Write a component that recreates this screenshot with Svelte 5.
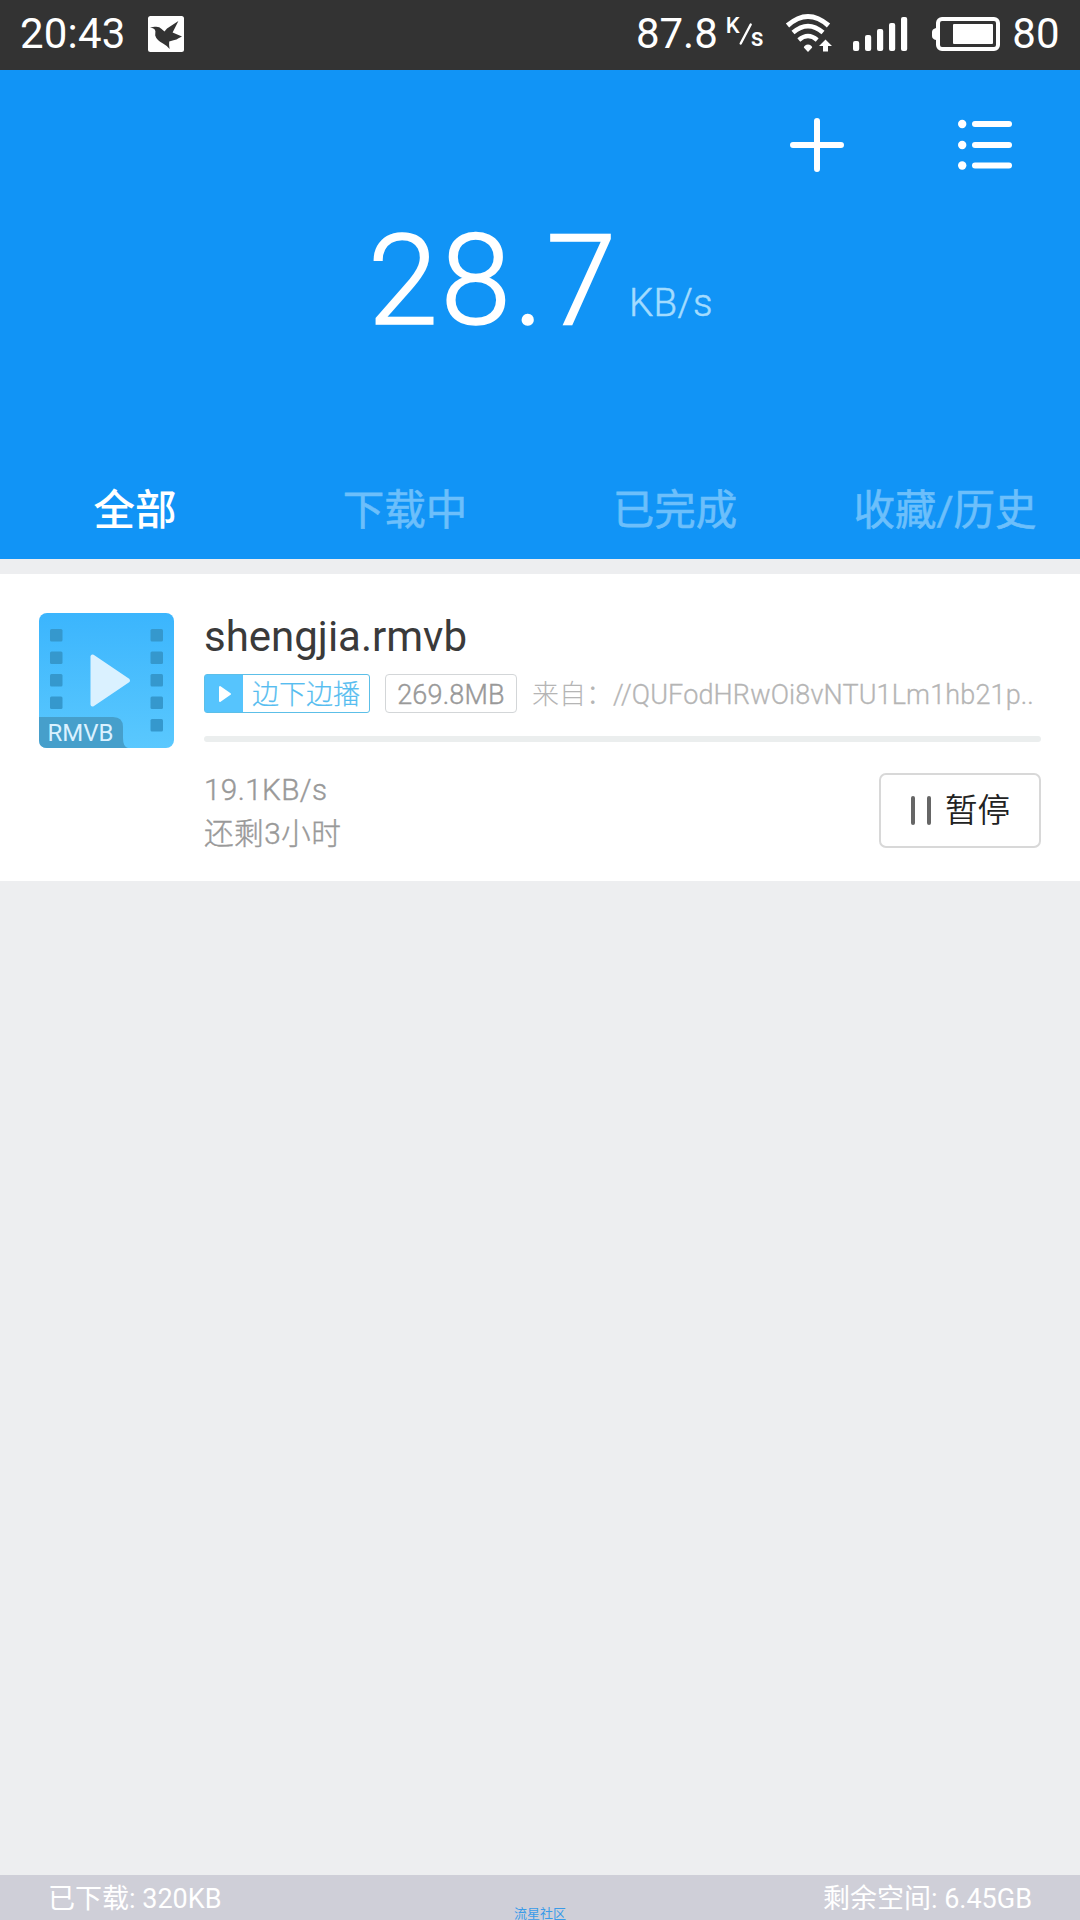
<script lang="ts">
  const tabs = ['全部', '下载中', '已完成', '收藏/历史'];
  const signal = [10, 16, 22, 28, 34];
  const leftHoles = [16, 38.5, 61, 83.5];
  const rightHoles = [16, 38.5, 61, 83.5, 106];

  let active = $state(0);

  const task = {
    name: 'shengjia.rmvb',
    type: 'RMVB',
    size: '269.8MB',
    from: '//QUFodHRwOi8vNTU1Lm1hb21p..',
    speed: '19.1KB/s',
    left: '还剩3小时',
  };
</script>

<div class="screen">
  <div class="status">
    <span class="time">20:43</span>
    <svg class="bird" viewBox="0 0 36 36">
      <rect width="36" height="36" rx="2.5" fill="#fff" />
      <path
        fill="#333"
        d="M2 11.6 6.5 10.8Q11 10 13.6 13L16.5 15.6 19 12.5 30.4 5 24.6 16.6 34 20.4 30.5 22.2 28.5 23.4 25.5 24.2 21.2 25.4Q20.8 29 21.6 33Q19 29.8 15 27.6Q8.5 24 7.2 19.5 L7.4 15.2Q7 12.2 2 11.6Z"
      />
    </svg>

    <span class="rate">87.8</span>
    <span class="unit">
      <span class="k">K</span>
      <svg viewBox="0 0 14 22">
        <path d="M1.7 20.5 11.7 1.5" stroke="#fff" stroke-width="2.4" stroke-linecap="round" />
      </svg>
      <span class="s">s</span>
    </span>
    <svg class="wifi" viewBox="0 0 46 39" fill="none" stroke="#fff">
      <path stroke-width="5" d="M1.5 11.5Q22 -6.5 42.5 11.5" />
      <path stroke-width="4.6" d="M7 18.6Q22 5.5 37 18.6" />
      <path stroke-width="4.4" d="M12.8 26Q22 18 31.2 26" />
      <path fill="#fff" stroke="none" d="M22 38 17.8 33.6Q18.5 30.6 22 30.4 25.5 30.6 26.2 33.6Z" />
      <path fill="#fff" stroke="none" d="M39.5 25.5 46 32H42V37.5H37V32H33Z" />
    </svg>
    <svg class="signal" viewBox="0 0 55 34" fill="#fff">
      {#each signal as h, i}
        <rect x={i * 12} y={34 - h} width="6.2" height={h} rx="2" />
      {/each}
    </svg>
    <svg class="battery" viewBox="0 0 68 34">
      <rect x="6" y="2" width="60" height="30" rx="4" fill="none" stroke="#fff" stroke-width="4" />
      <path fill="#fff" d="M4 11V23Q0 22 0 19V15Q0 12 4 11Z" />
      <rect x="21" y="7" width="40" height="20" rx="1" fill="#fff" />
    </svg>
    <span class="level">80</span>
  </div>

  <header>
    <div class="actions">
      <svg class="plus" viewBox="0 0 54 54" stroke="#fff" stroke-width="6" stroke-linecap="round">
        <path d="M27 3V51M3 27H51" />
      </svg>
      <svg class="list" viewBox="0 0 54 50" fill="#fff">
        {#each [4, 25, 45.5] as y}
          <circle cx="4.2" cy={y} r="4.2" />
          <rect x="14" y={y - 3} width="40" height="6" rx="3" />
        {/each}
      </svg>
    </div>
    <div class="speed">
      <span class="num">28.7</span>
      <span class="per">KB/s</span>
    </div>
    <nav>
      {#each tabs as tab, i}
        <button class="tab" class:active={active === i} onclick={() => (active = i)}>{tab}</button>
      {/each}
    </nav>
  </header>

  <section class="task">
    <svg class="thumb" viewBox="0 0 135 135">
      <defs>
        <linearGradient id="sky" x1="0" y1="0" x2="0" y2="1">
          <stop offset="0" stop-color="#3bb5fd" />
          <stop offset="1" stop-color="#5ac8fe" />
        </linearGradient>
      </defs>
      <rect width="135" height="135" rx="8" fill="url(#sky)" />
      {#each leftHoles as y}
        <rect x="11" {y} width="12.5" height="12.5" rx="1.5" fill="#3598cd" />
      {/each}
      {#each rightHoles as y}
        <rect x="111.5" {y} width="12.5" height="12.5" rx="1.5" fill="#3598cd" />
      {/each}
      <path
        d="M53.5 43.5V91.5L89 67.5Z"
        fill="#daf1ff"
        stroke="#daf1ff"
        stroke-width="4"
        stroke-linejoin="round"
      />
      <path d="M0 104H74Q84 104 84 114V125Q84 134 89 135H8Q0 135 0 127Z" fill="#469fcb" />
      <text x="8.5" y="128" textLength="66" lengthAdjust="spacingAndGlyphs">{task.type}</text>
    </svg>

    <div class="info">
      <div class="name">{task.name}</div>
      <div class="meta">
        <span class="play">
          <span class="tri">
            <svg viewBox="0 0 14 18">
              <path d="M2 2V16L12 9Z" fill="#fff" stroke="#fff" stroke-width="2" stroke-linejoin="round" />
            </svg>
          </span>
          <span class="label">边下边播</span>
        </span>
        <span class="size">{task.size}</span>
        <span class="from">来自：<span class="link">{task.from}</span></span>
      </div>
      <div class="progress"></div>
      <div class="bottom">
        <div class="stats">
          <div>{task.speed}</div>
          <div>{task.left}</div>
        </div>
        <button class="pause">
          <svg viewBox="0 0 20 29" fill="#666">
            <rect width="4" height="29" rx="2" />
            <rect x="16" width="4" height="29" rx="2" />
          </svg>
          暂停
        </button>
      </div>
    </div>
  </section>

  <footer>
    <span>已下载: 320KB</span>
    <span>剩余空间: 6.45GB</span>
    <div class="mark">流星社区</div>
  </footer>
</div>

<style>
  :global(body) {
    margin: 0;
  }
  .screen {
    display: flex;
    flex-direction: column;
    width: 1080px;
    height: 1920px;
    overflow: hidden;
    background: #edeef0;
    font-family: Roboto, 'Noto Sans CJK SC', sans-serif;
    white-space: nowrap;
  }
  svg {
    display: block;
    flex: none;
    overflow: visible;
  }
  button {
    border: none;
    padding: 0;
    background: none;
    font: inherit;
  }

  .status {
    display: flex;
    align-items: center;
    box-sizing: border-box;
    height: 70px;
    padding: 0 20.5px 3px 20px;
    background: #333;
    color: #fff;
    font-size: 42px;
    line-height: 50px;
  }
  .time {
    letter-spacing: 0.2px;
  }
  .bird {
    width: 36px;
    height: 36px;
    margin-left: 22px;
  }
  .rate {
    margin-left: auto;
  }
  .unit {
    display: flex;
    width: 36px;
    height: 32px;
    margin-left: 8px;
    font-size: 22px;
    font-weight: 500;
    line-height: 22px;
  }
  .unit svg {
    width: 14px;
    height: 22px;
    margin: 5px -2px 0 -1px;
  }
  .k {
    margin-top: -3px;
  }
  .s {
    margin-top: 9px;
    font-size: 25px;
  }
  .wifi {
    width: 46px;
    height: 39px;
    margin-left: 24px;
  }
  .signal {
    width: 55px;
    height: 34px;
    margin-left: 21.5px;
  }
  .battery {
    width: 68px;
    height: 34px;
    margin-left: 23.5px;
  }
  .level {
    margin-left: 12.5px;
  }

  header {
    display: flex;
    flex-direction: column;
    height: 489px;
    background: #1194f6;
    color: #fff;
  }
  .actions {
    display: flex;
    align-items: center;
    justify-content: flex-end;
    gap: 114px;
    height: 149px;
    padding-right: 68.5px;
  }
  .plus {
    width: 54px;
    height: 54px;
  }
  .list {
    width: 54px;
    height: 50px;
  }
  .speed {
    display: flex;
    align-items: flex-start;
    height: 242px;
    padding-left: 368px;
    font-weight: 300;
  }
  .num {
    width: 261px;
    margin-top: -1px;
    font-size: 126px;
    letter-spacing: 2.8px;
    line-height: 127px;
    -webkit-text-stroke: 1.7px #fff;
  }
  .per {
    margin-top: 65px;
    color: #a3dcff;
    font-size: 38.5px;
    letter-spacing: 0.3px;
    line-height: 38px;
    -webkit-text-stroke: 0.5px #a3dcff;
  }
  nav {
    display: grid;
    grid-template-columns: repeat(4, 1fr);
    height: 98px;
  }
  .tab {
    padding-top: 2px;
    color: #6cbffb;
    font-size: 41.5px;
    line-height: 60px;
    -webkit-text-stroke: 0.6px;
  }
  .tab.active {
    color: #fff;
    font-weight: 500;
    -webkit-text-stroke: 0;
  }

  .task {
    display: flex;
    box-sizing: border-box;
    height: 307px;
    margin-top: 15px;
    padding: 39px 39px 0;
    background: #fff;
  }
  .thumb {
    width: 135px;
    height: 135px;
  }
  .thumb text {
    fill: #daf1ff;
    font-size: 24px;
  }
  .info {
    flex: 1;
    min-width: 0;
    margin-left: 30px;
  }
  .name {
    height: 61px;
    color: #3a3a3a;
    font-size: 42px;
    line-height: 48px;
  }
  .meta {
    display: flex;
    height: 39px;
    font-size: 27px;
    font-weight: 300;
    line-height: 40px;
  }
  .play {
    display: flex;
    box-sizing: border-box;
    width: 166px;
    border: 1px solid #5cbfe8;
    border-radius: 3px;
    color: #56bdf0;
  }
  .tri {
    display: flex;
    align-items: center;
    justify-content: center;
    width: 38px;
    background: #56c4fd;
  }
  .tri svg {
    width: 14px;
    height: 18px;
    margin-left: 2px;
  }
  .label {
    margin-left: 9px;
    -webkit-text-stroke: 0.2px;
  }
  .size {
    box-sizing: border-box;
    width: 132px;
    margin-left: 15px;
    border: 1px solid #d3d6d8;
    border-radius: 4px;
    color: #999;
    letter-spacing: 0.2px;
    text-align: center;
    -webkit-text-stroke: 0.4px #999;
  }
  .from {
    display: flex;
    margin-left: 15px;
    color: #b5b5b5;
    line-height: 42px;
  }
  .link {
    letter-spacing: 0.14px;
    -webkit-text-stroke: 0.3px #b5b5b5;
  }
  .progress {
    height: 6px;
    margin-top: 23px;
    border-radius: 3px;
    background: #ebeeee;
  }
  .bottom {
    display: flex;
    justify-content: space-between;
    margin-top: 31px;
  }
  .stats {
    margin-top: -5px;
    color: #999;
    font-size: 29.7px;
    font-weight: 300;
    letter-spacing: 0.4px;
    line-height: 43.5px;
    -webkit-text-stroke: 0.4px #999;
  }
  .pause {
    display: flex;
    align-items: center;
    box-sizing: border-box;
    width: 162px;
    height: 75px;
    padding-left: 30px;
    border: 2px solid #d8d8d8;
    border-radius: 7px;
    color: #222;
    font-size: 32.5px;
    font-weight: 350;
    line-height: 54px;
  }
  .pause svg {
    width: 20px;
    height: 29px;
    margin-right: 14px;
  }

  footer {
    position: relative;
    display: flex;
    justify-content: space-between;
    box-sizing: border-box;
    height: 45px;
    margin-top: auto;
    padding: 0 48px;
    background: #cfcfd8;
    color: #fff;
    font-size: 27px;
    line-height: 49px;
  }
  /* community watermark stamped over the bar */
  .mark {
    position: absolute;
    left: 514px;
    bottom: 0;
    color: #3a9be8;
    font-size: 13px;
    line-height: 13px;
  }
</style>
